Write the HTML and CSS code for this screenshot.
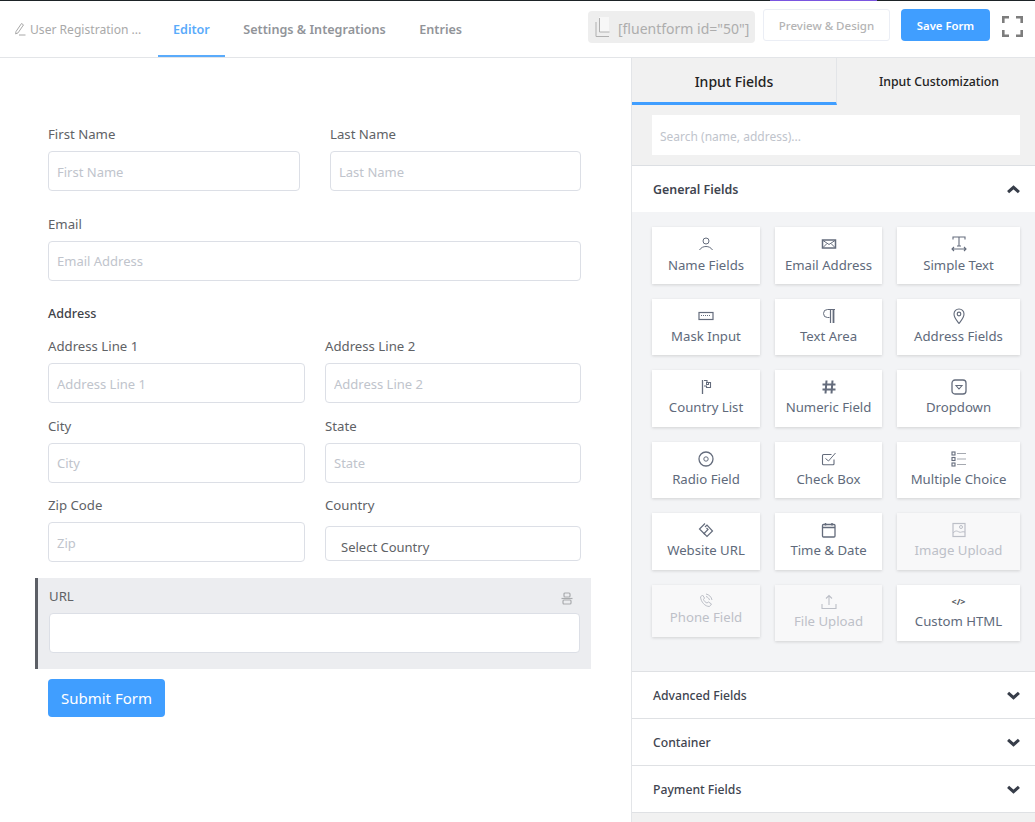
FILE: index.html
```html
<!DOCTYPE html>
<html lang="en">
<head>
<meta charset="utf-8">
<title>Fluent Forms Editor</title>
<link rel="stylesheet" href="styles.css">
</head>
<body>
<div class="app">
  <div class="topline"><div class="topline-accent"></div></div>
  <header class="header">
    <div class="form-title">
      <svg class="pencil" width="12" height="14" viewBox="0 0 12 14" fill="none" stroke="#a8a8a8" stroke-width="1"><path d="M2 9.500 7.500 1.500l2 1.400-5.500 8-2.400 1z"/><path d="M5 13h6.500"/></svg>
      <span>User Registration ...</span>
    </div>
    <nav class="nav">
      <a class="nav-item active">Editor</a>
      <a class="nav-item">Settings &amp; Integrations</a>
      <a class="nav-item">Entries</a>
    </nav>
    <div class="actions">
      <div class="shortcode">
        <svg width="15" height="20" viewBox="0 0 15 20" fill="none"><rect x="4" y="0" width="10" height="15" fill="#f7f7f7"/><path d="M4.500 1v14h10M1 5v14.500h13" stroke="#b0b0b0" stroke-width="1"/></svg>
        <span>[fluentform id="50"]</span>
      </div>
      <button class="btn-preview">Preview &amp; Design</button>
      <button class="btn-save">Save Form</button>
      <svg class="fullscreen" width="21" height="21" viewBox="0 0 21 21" fill="none" stroke="#7d7d7d" stroke-width="2.600"><path d="M1.300 7V1.300H7M14 1.300h5.700V7M1.300 14v5.700H7M14 19.700h5.700V14"/></svg>
    </div>
  </header>

  <div class="workspace">
    <main class="canvas">
      <form class="form">
        <div class="row row-name">
          <div class="field"><label class="label">First Name</label><input class="input" placeholder="First Name"></div>
          <div class="field"><label class="label">Last Name</label><input class="input" placeholder="Last Name"></div>
        </div>
        <div class="field field-email"><label class="label">Email</label><input class="input input-tight" placeholder="Email Address"></div>
        <div class="address-title">Address</div>
        <div class="row row-address">
          <div class="field"><label class="label">Address Line 1</label><input class="input" placeholder="Address Line 1"></div>
          <div class="field"><label class="label">Address Line 2</label><input class="input" placeholder="Address Line 2"></div>
        </div>
        <div class="row row-address row-city">
          <div class="field"><label class="label">City</label><input class="input input-tight" placeholder="City"></div>
          <div class="field"><label class="label">State</label><input class="input input-tight" placeholder="State"></div>
        </div>
        <div class="row row-address row-zip">
          <div class="field"><label class="label">Zip Code</label><input class="input" placeholder="Zip"></div>
          <div class="field"><label class="label">Country</label><div class="select">Select Country</div></div>
        </div>
        <div class="selected-field">
          <div class="selected-head">
            <label class="label">URL</label>
            <svg width="12" height="13" viewBox="0 0 12 13" fill="none" stroke="#a9abae" stroke-width="1.200"><rect x="3" y="1" width="6" height="4" rx="1"/><rect x="2" y="8" width="8" height="4" rx="1"/><path d="M0.500 6.500h11"/></svg>
          </div>
          <input class="input">
        </div>
        <button type="button" class="btn-submit">Submit Form</button>
      </form>
    </main>

    <aside class="sidebar">
      <div class="tabs">
        <div class="tab tab-active">Input Fields</div>
        <div class="tab tab-custom">Input Customization</div>
      </div>
      <div class="search-wrap"><input class="search" placeholder="Search (name, address)..."></div>

      <div class="acc-head acc-open">
        <span>General Fields</span>
        <svg class="chev" viewBox="0 0 12 8" fill="none" stroke="#373d49" stroke-width="2.800"><path d="M1 6.500 6 2l5 4.500"/></svg>
      </div>
      <div class="cards">
        <div class="card"><svg class="ico" width="16" height="16" viewBox="0 0 16 16"><circle cx="8" cy="5" r="3"/><path d="M1.500 14c1.500-2.500 4-3.500 6.500-3.500s5 1 6.500 3.500"/></svg><span>Name Fields</span></div>
        <div class="card"><svg class="ico" width="16" height="16" viewBox="0 0 16 16"><rect x="1.500" y="4" width="13" height="8" stroke-width="1.500"/><path d="m2 4.500 6 4 6-4M2 11.500l4-4M14 11.500l-4-4"/></svg><span>Email Address</span></div>
        <div class="card"><svg class="ico" width="16" height="16" viewBox="0 0 16 16"><path d="M2 3.500V1h12v2.500M8 1v9M6 10h4M1 13h14M3 11l-2 2 2 2M13 11l2 2-2 2" stroke-width="1.100"/></svg><span>Simple Text</span></div>

        <div class="card"><svg class="ico" width="16" height="16" viewBox="0 0 16 16"><rect x="1" y="4.500" width="14" height="7" stroke-width="1.200"/><path d="M3 7.500h10" stroke-dasharray="1 1"/></svg><span>Mask Input</span></div>
        <div class="card"><svg class="ico" width="16" height="16" viewBox="0 0 16 16"><path d="M14 1.500H6.500a4 4 0 0 0 0 8h2"/><path d="M9.500 1.500V15" stroke-width="1.200"/><path d="M12.500 1.500V15" stroke-width="1.800"/></svg><span>Text Area</span></div>
        <div class="card"><svg class="ico" width="16" height="16" viewBox="0 0 16 16"><path d="M8 15.500C5 11.500 3 9.500 3 6a5 5 0 0 1 10 0c0 3.500-2 5.500-5 9.500z" stroke-width="1.100"/><circle cx="8" cy="6" r="1.800" stroke-width="1.200"/></svg><span>Address Fields</span></div>

        <div class="card"><svg class="ico" width="16" height="16" viewBox="0 0 16 16"><path d="M4.500 1v14" stroke-width="1.300"/><path d="M6 1.500h3v2h3.500v5H8.500V7H6" stroke-width="1.100"/><rect x="8.500" y="3.500" width="2" height="2"/></svg><span>Country List</span></div>
        <div class="card"><svg class="ico" width="16" height="16" viewBox="0 0 16 16"><path d="M5.500 1.500 4.500 14.500M11.500 1.500l-1 13M1.500 5.500h13M1.500 10.500h13" stroke-width="2"/></svg><span>Numeric Field</span></div>
        <div class="card"><svg class="ico" width="16" height="16" viewBox="0 0 16 16"><rect x="1" y="1" width="14" height="14" rx="3" stroke-width="1.300"/><path d="M5 6.500h6L8 10z" stroke-width="1.100"/></svg><span>Dropdown</span></div>

        <div class="card"><svg class="ico" width="16" height="16" viewBox="0 0 16 16"><circle cx="8" cy="8" r="7" stroke-width="1.300"/><circle cx="8" cy="8" r="2.200"/></svg><span>Radio Field</span></div>
        <div class="card"><svg class="ico" width="16" height="16" viewBox="0 0 16 16"><path d="M13 8.500v4.300a1 1 0 0 1-1 1H2.500a1 1 0 0 1-1-1V4.500a1 1 0 0 1 1-1h8" stroke-width="1.100"/><path d="m4.500 7.500 3 2.500 7-8"/></svg><span>Check Box</span></div>
        <div class="card"><svg class="ico" width="16" height="16" viewBox="0 0 16 16"><rect x="1" y="1" width="3" height="3" stroke-width="1.100"/><rect x="1" y="6.500" width="3" height="3" stroke-width="1.100"/><rect x="1" y="12" width="3" height="3" stroke-width="1.100"/><path d="M6 2.500h9M6 8h9M6 13.500h9" stroke="#a5a9b0"/></svg><span>Multiple Choice</span></div>

        <div class="card"><svg class="ico" width="16" height="16" viewBox="0 0 16 16"><path d="M7 1.500 1.500 7 7 12.500" stroke-width="1.200"/><path d="M7 5l2-2 5.500 6-5.500 5.500-3-3 4-4-1.500-1.500" stroke-width="1.200"/></svg><span>Website URL</span></div>
        <div class="card"><svg class="ico" width="16" height="16" viewBox="0 0 16 16"><rect x="1.500" y="2.500" width="12.500" height="12.500" rx="1" stroke-width="1.300"/><path d="M1.500 5.500h12.500M4.500 1v2.500M11 1v2.500" stroke-width="1.500"/></svg><span>Time &amp; Date</span></div>
        <div class="card card-off"><svg class="ico" width="16" height="16" viewBox="0 0 16 16"><rect x="2" y="1.500" width="12" height="13" stroke-width="1.200"/><circle cx="10" cy="5" r="1.500"/><path d="M2 11c3-3 4-2 6-1s3-1 6 0"/></svg><span>Image Upload</span></div>

        <div class="card card-off card-short"><svg class="ico" width="16" height="16" viewBox="0 0 16 16"><path d="M2.500 4 4.500 2l2 3-1 1.500c.5 1.500 2 3 3.500 3.500l1.500-1 3 2-2 2.500C7 13.500 3 9 2.500 4z"/><path d="M8 1c3 .5 5.500 3 6 6M8 3.500c1.500.3 3.200 2 3.500 3.500"/></svg><span>Phone Field</span></div>
        <div class="card card-off card-last"><svg class="ico" width="16" height="16" viewBox="0 0 16 16"><path d="M8 11V1.500M5 4.500l3-3 3 3M1 10v4.500h14V10" stroke-width="1.100"/></svg><span>File Upload</span></div>
        <div class="card card-last"><span class="code-ico">&lt;/&gt;</span><span>Custom HTML</span></div>
      </div>

      <div class="acc-head acc-light"><span>Advanced Fields</span><svg class="chev" viewBox="0 0 12 8" fill="none" stroke="#373d49" stroke-width="2.800"><path d="M1 1.500 6 6l5-4.500"/></svg></div>
      <div class="acc-head acc-light"><span>Container</span><svg class="chev" viewBox="0 0 12 8" fill="none" stroke="#373d49" stroke-width="2.800"><path d="M1 1.500 6 6l5-4.500"/></svg></div>
      <div class="acc-head acc-light"><span>Payment Fields</span><svg class="chev" viewBox="0 0 12 8" fill="none" stroke="#373d49" stroke-width="2.800"><path d="M1 1.500 6 6l5-4.500"/></svg></div>
    </aside>
  </div>
</div>
</body>
</html>
```
FILE: styles.css
```css
* { box-sizing: border-box; }
html, body { margin: 0; padding: 0; }
body { font-family: "Noto Sans", "Open Sans", sans-serif; font-size: 14px; color: #606266; background: #fff; }
.app { width: 1035px; height: 822px; overflow: hidden; display: flex; flex-direction: column; }

.topline { height: 1px; background: #1d2327; flex: none; }
.topline-accent { width: 107px; height: 1px; margin-left: 770px; background: #7a55e0; }

.header { height: 57px; flex: none; display: flex; align-items: flex-start; border-bottom: 1px solid #e3e5e8; padding-left: 14px; }
.form-title { width: 144px; height: 56px; display: flex; align-items: center; gap: 4px; color: #a9a9a9; font-size: 12.1px; }
.pencil { flex: none; }
.nav { display: flex; gap: 3.5px; }
.nav-item { height: 56px; line-height: 58px; padding: 0 15px; font-size: 12.6px; font-weight: 600; color: #919499; }
.nav-item.active { color: #5aabfb; border-bottom: 2px solid #5aabfb; }
.actions { margin-left: auto; display: flex; align-items: flex-start; padding-right: 12px; padding-top: 8px; }
.shortcode { width: 167px; height: 32px; margin-top: 2px; background: #eee; border-radius: 4px; display: flex; align-items: center; gap: 8px; padding-left: 7px; color: #adadad; font-size: 14px; white-space: nowrap; }
.shortcode span { padding-top: 2px; }
.btn-preview { width: 127px; height: 32px; margin-left: 8px; background: #fff; border: 1px solid #ebeef5; border-radius: 3px; color: #b4b4b4; font: 500 11.5px "Noto Sans", sans-serif; padding: 0; }
.btn-save { width: 89px; height: 32px; margin-left: 11px; background: #409eff; border: 0; border-radius: 4px; color: #fff; font: 600 11.3px "Noto Sans", sans-serif; padding: 0; }
.fullscreen { margin: 7px 0 0 12px; flex: none; }

.workspace { flex: 1; display: flex; min-height: 0; }
.canvas { width: 631px; flex: none; padding: 66px 0 0 48px; }
.form { width: 533px; }
.row { display: grid; gap: 0 30px; }
.row-name { grid-template-columns: 252px 251px; }
.row-address { grid-template-columns: 257px 256px; column-gap: 20px; }
.row-city { margin-top: 13px; }
.row-zip { margin-top: 12px; }
.field { display: flex; flex-direction: column; }
.label { display: block; height: 20px; line-height: 20px; margin-bottom: 7px; font-size: 13.2px; color: #606266; }
.input { display: block; width: 100%; height: 40px; border: 1px solid #dcdfe6; border-radius: 4px; background: #fff; padding: 1px 8px 0; font: 13px "Noto Sans", sans-serif; color: #606266; outline: 0; }
.input-tight { padding-top: 0; }
.input::placeholder { color: #c0c4cc; opacity: 1; }
.field-email { margin-top: 23px; }
.address-title { margin-top: 23px; margin-bottom: 12px; height: 20px; line-height: 20px; font-size: 12.6px; color: #3f4349; font-weight: 500; }
.select { height: 35px; margin-top: 4px; border: 1px solid #dcdfe6; border-radius: 4px; padding: 10px 15px 0; font-size: 13px; line-height: 20px; color: #606266; }

.selected-field { margin: 16px -10px 0 -13px; height: 91px; background: #ecedf0; border-left: 3px solid #5c5f66; padding: 8px 11px 0 11px; }
.selected-head { display: flex; justify-content: space-between; align-items: flex-start; height: 27px; }
.selected-head svg { margin: 6px 7px 0 0; }
.btn-submit { display: block; margin-top: 10px; width: 117px; height: 38px; border: 0; border-radius: 4px; background: #409eff; color: #fff; font: 15px "Noto Sans", sans-serif; padding: 0; }

.sidebar { width: 404px; flex: none; border-left: 1px solid #e3e5e8; background: #f1f1f1; }
.tabs { display: flex; height: 47px; }
.tab { height: 47px; display: flex; align-items: center; justify-content: center; color: #222; }
.tab-active { width: 205px; font-size: 14px; font-weight: 500; border-right: 1px solid #e3e5e8; border-bottom: 3px solid #409eff; padding-top: 2px; }
.tab-custom { flex: 1; font-size: 12.3px; font-weight: 500; padding: 0 0 0 6px; }
.search-wrap { height: 61px; padding: 10px 15px 0 20px; border-bottom: 1px solid #dcdfe3; }
.search { display: block; width: 100%; height: 40px; border: 0; background: #fff; padding: 2px 8px 0; font: 12px "Noto Sans", sans-serif; outline: 0; }
.search::placeholder { color: #c0c4cc; opacity: 1; }

.acc-head { height: 47px; background: #fff; border-bottom: 1px solid #dfe1e4; display: flex; align-items: center; justify-content: space-between; padding: 0 15px 0 21px; font-size: 12.4px; font-weight: 600; color: #3f4550; }
.acc-light { font-size: 12.2px; font-weight: 500; }
.acc-open { height: 46px; border-bottom: 0; }
.chev { flex: none; width: 13px; height: 9px; }

.cards { height: 460px; background: #f3f4f6; border-bottom: 1px solid #dfe1e4; padding: 15px 15px 0 20px; display: grid; grid-template-columns: 108px 107px 123px; grid-auto-rows: 56.5px; column-gap: 15px; row-gap: 15px; align-items: start; }
.card { height: 56.5px; background: #fff; box-shadow: 0 1px 3px rgba(0,0,0,.14); display: flex; flex-direction: column; align-items: center; padding-top: 9px; font-size: 13.2px; line-height: 20px; color: #606a7b; white-space: nowrap; }
.card > span:last-child { margin-top: 2px; }
.card:nth-child(-n+3) > span:last-child { margin-top: 3px; }
.card.card-last > span:last-child { margin-top: 1.500px; }
.ico { display: block; flex: none; fill: none; stroke: #646c7c; stroke-width: 1; }
.code-ico { height: 16px; line-height: 16px; font-size: 9px; font-weight: 700; color: #55595f; }
.card-off { background: #f8f8f9; color: #bdc0c8; }
.card-off .ico { stroke: #bcbfc7; }
.card.card-short { height: 52px; padding-top: 8px; }
.card.card-short > span:last-child { margin-top: -1.500px; }
```
